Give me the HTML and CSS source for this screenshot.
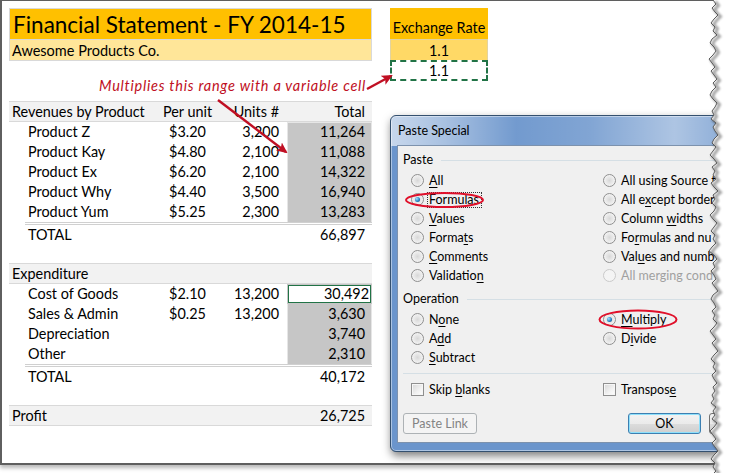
FILE: index.html
```html
<!DOCTYPE html>
<html>
<head>
<meta charset="utf-8">
<title>Paste Special - Multiply</title>
<link rel="stylesheet" href="styles.css">
</head>
<body>
<div class="frame">
  <div class="top">
    <div class="titlebox">
      <div class="title">Financial Statement - FY 2014-15</div>
      <div class="subtitle">Awesome Products Co.</div>
    </div>
    <div class="fx">
      <div class="fx-head">Exchange Rate</div>
      <div class="fx-val">1.1</div>
      <div class="fx-copy">1.1</div>
    </div>
  </div>

  <div class="sheet">
    <div class="row band"><span class="c1">Revenues by Product</span><span class="c2">Per unit</span><span class="c3">Units #</span><span class="c4">Total</span></div>
    <div class="row item"><span class="c1">Product Z</span><span class="c2">$3.20</span><span class="c3">3,200</span><span class="c4 sel first">11,264</span></div>
    <div class="row item"><span class="c1">Product Kay</span><span class="c2">$4.80</span><span class="c3">2,100</span><span class="c4 sel">11,088</span></div>
    <div class="row item"><span class="c1">Product Ex</span><span class="c2">$6.20</span><span class="c3">2,100</span><span class="c4 sel">14,322</span></div>
    <div class="row item"><span class="c1">Product Why</span><span class="c2">$4.40</span><span class="c3">3,500</span><span class="c4 sel">16,940</span></div>
    <div class="row item"><span class="c1">Product Yum</span><span class="c2">$5.25</span><span class="c3">2,300</span><span class="c4 sel last">13,283</span></div>
    <div class="dbl"></div>
    <div class="row item"><span class="c1">TOTAL</span><span class="c2"></span><span class="c3"></span><span class="c4">66,897</span></div>

    <div class="row band spaced"><span class="c1">Expenditure</span><span class="c2"></span><span class="c3"></span><span class="c4"></span></div>
    <div class="row item"><span class="c1">Cost of Goods</span><span class="c2">$2.10</span><span class="c3">13,200</span><span class="c4 active">30,492</span></div>
    <div class="row item"><span class="c1">Sales &amp; Admin</span><span class="c2">$0.25</span><span class="c3">13,200</span><span class="c4 sel">3,630</span></div>
    <div class="row item"><span class="c1">Depreciation</span><span class="c2"></span><span class="c3"></span><span class="c4 sel">3,740</span></div>
    <div class="row item"><span class="c1">Other</span><span class="c2"></span><span class="c3"></span><span class="c4 sel last">2,310</span></div>
    <div class="dbl"></div>
    <div class="row item"><span class="c1">TOTAL</span><span class="c2"></span><span class="c3"></span><span class="c4">40,172</span></div>

    <div class="row band spaced"><span class="c1">Profit</span><span class="c2"></span><span class="c3"></span><span class="c4">26,725</span></div>
  </div>
</div>

<div class="note">Multiplies this range with a variable cell</div>

<div class="dialog">
  <div class="dlg-title">Paste Special</div>
  <div class="dlg-panel">
    <div class="group">Paste</div>
    <div class="opts">
      <div class="opt"><i class="radio"></i><span><u>A</u>ll</span></div>
      <div class="opt"><i class="radio"></i><span>All using Source t</span></div>
      <div class="opt"><i class="radio on"></i><span class="focus"><u>F</u>ormulas</span></div>
      <div class="opt"><i class="radio"></i><span>All e<u>x</u>cept borders</span></div>
      <div class="opt"><i class="radio"></i><span><u>V</u>alues</span></div>
      <div class="opt"><i class="radio"></i><span>Column <u>w</u>idths</span></div>
      <div class="opt"><i class="radio"></i><span>Forma<u>t</u>s</span></div>
      <div class="opt"><i class="radio"></i><span>Fo<u>r</u>mulas and nu</span></div>
      <div class="opt"><i class="radio"></i><span><u>C</u>omments</span></div>
      <div class="opt"><i class="radio"></i><span>Val<u>u</u>es and numb</span></div>
      <div class="opt"><i class="radio"></i><span>Validatio<u>n</u></span></div>
      <div class="opt off"><i class="radio"></i><span>All merging cond</span></div>
    </div>
    <div class="group">Operation</div>
    <div class="opts">
      <div class="opt"><i class="radio"></i><span>N<u>o</u>ne</span></div>
      <div class="opt"><i class="radio on"></i><span><u>M</u>ultiply</span></div>
      <div class="opt"><i class="radio"></i><span>A<u>d</u>d</span></div>
      <div class="opt"><i class="radio"></i><span>D<u>i</u>vide</span></div>
      <div class="opt"><i class="radio"></i><span><u>S</u>ubtract</span></div>
      <div class="opt"></div>
    </div>
    <div class="sep"></div>
    <div class="opts checks">
      <div class="opt"><i class="check"></i><span>Skip <u>b</u>lanks</span></div>
      <div class="opt"><i class="check"></i><span>Transpos<u>e</u></span></div>
    </div>
    <div class="buttons">
      <div class="btn disabled">Paste Link</div>
      <div class="btn default">OK</div>
      <div class="btn"></div>
    </div>
  </div>
</div>

<svg class="marks" width="733" height="473" viewBox="0 0 733 473">
  <defs>
    <marker id="ah" markerWidth="11" markerHeight="10" refX="9" refY="5" orient="auto" markerUnits="userSpaceOnUse">
      <path d="M0,0 L11,5 L0,10 L2.5,5 Z" fill="#c00f23"/>
    </marker>
  </defs>
  <line x1="367" y1="89" x2="391" y2="76" stroke="#c00f23" stroke-width="2.4" marker-end="url(#ah)"/>
  <line x1="218" y1="100" x2="286" y2="152" stroke="#c00f23" stroke-width="2.4" marker-end="url(#ah)"/>
  <ellipse cx="444.5" cy="200" rx="38.5" ry="7" fill="none" stroke="#e0102a" stroke-width="2"/>
  <ellipse cx="638" cy="319.5" rx="38.5" ry="9" fill="none" stroke="#e0102a" stroke-width="2"/>
</svg>

<svg class="torn" width="33" height="473" viewBox="0 0 33 473">
  <defs>
    <filter id="blur" x="-50%" y="-5%" width="200%" height="110%"><feGaussianBlur stdDeviation="1.2"/></filter>
  </defs>
  <polygon fill="#ffffff" points="13,0 16,4 12,8 15,12 18,15 14,19 11,23 15,27 13,31 17,35 12,39 10,43 14,47 16,51 13,55 9,59 12,63 15,67 11,71 14,75 17,79 13,83 16,87 12,91 10,95 13,99 17,103 15,107 12,111 14,115 11,119 16,123 13,127 15,131 18,135 14,139 12,143 16,147 13,151 10,155 14,159 17,163 12,167 15,171 13,175 16,179 11,183 14,187 18,191 13,195 15,199 12,203 16,207 14,211 10,215 13,219 17,223 14,227 11,231 15,235 13,239 16,243 12,247 9,251 14,255 17,259 13,263 15,267 11,271 14,275 16,279 12,283 15,287 18,291 13,295 11,299 14,303 16,307 12,311 15,315 13,319 17,323 14,327 10,331 13,335 16,339 12,343 15,347 18,351 14,355 11,359 15,363 13,367 16,371 12,375 14,379 17,383 13,387 15,391 12,395 14,399 11,403 16,407 13,411 15,415 12,419 17,423 14,427 10,431 13,435 16,439 12,443 15,447 18,451 14,455 11,459 15,463 13,467 16,471 14,473 33,473 33,0"/>
  <polyline fill="none" stroke="rgba(0,0,0,0.35)" stroke-width="3" filter="url(#blur)" transform="translate(2.5,1.5)" points="13,0 16,4 12,8 15,12 18,15 14,19 11,23 15,27 13,31 17,35 12,39 10,43 14,47 16,51 13,55 9,59 12,63 15,67 11,71 14,75 17,79 13,83 16,87 12,91 10,95 13,99 17,103 15,107 12,111 14,115 11,119 16,123 13,127 15,131 18,135 14,139 12,143 16,147 13,151 10,155 14,159 17,163 12,167 15,171 13,175 16,179 11,183 14,187 18,191 13,195 15,199 12,203 16,207 14,211 10,215 13,219 17,223 14,227 11,231 15,235 13,239 16,243 12,247 9,251 14,255 17,259 13,263 15,267 11,271 14,275 16,279 12,283 15,287 18,291 13,295 11,299 14,303 16,307 12,311 15,315 13,319 17,323 14,327 10,331 13,335 16,339 12,343 15,347 18,351 14,355 11,359 15,363 13,367 16,371 12,375 14,379 17,383 13,387 15,391 12,395 14,399 11,403 16,407 13,411 15,415 12,419 17,423 14,427 10,431 13,435 16,439 12,443 15,447 18,451 14,455 11,459 15,463 13,467 16,471 14,473"/>
  <polyline fill="none" stroke="#5a5a5a" stroke-width="1" points="13,0 16,4 12,8 15,12 18,15 14,19 11,23 15,27 13,31 17,35 12,39 10,43 14,47 16,51 13,55 9,59 12,63 15,67 11,71 14,75 17,79 13,83 16,87 12,91 10,95 13,99 17,103 15,107 12,111 14,115 11,119 16,123 13,127 15,131 18,135 14,139 12,143 16,147 13,151 10,155 14,159 17,163 12,167 15,171 13,175 16,179 11,183 14,187 18,191 13,195 15,199 12,203 16,207 14,211 10,215 13,219 17,223 14,227 11,231 15,235 13,239 16,243 12,247 9,251 14,255 17,259 13,263 15,267 11,271 14,275 16,279 12,283 15,287 18,291 13,295 11,299 14,303 16,307 12,311 15,315 13,319 17,323 14,327 10,331 13,335 16,339 12,343 15,347 18,351 14,355 11,359 15,363 13,367 16,371 12,375 14,379 17,383 13,387 15,391 12,395 14,399 11,403 16,407 13,411 15,415 12,419 17,423 14,427 10,431 13,435 16,439 12,443 15,447 18,451 14,455 11,459 15,463 13,467 16,471 14,473"/>
</svg>
</body>
</html>
```

FILE: styles.css
```css
* { box-sizing: border-box; }
html, body { margin: 0; padding: 0; background: #fff; }
body {
  width: 733px;
  height: 473px;
  overflow: hidden;
  position: relative;
  font-family: Lato, "Open Sans", sans-serif;
  color: #000;
}

/* spreadsheet frame */
.frame {
  width: 733px;
  height: 465px;
  border-style: solid;
  border-color: #5f5f5f;
  border-width: 1px 0 2px 2px;
  padding: 7px 0 0 7px;
  box-shadow: 0 3px 4px rgba(0, 0, 0, 0.28);
}
.top { display: flex; align-items: flex-start; }
.titlebox { width: 363px; border: 1px solid #d9d9d9; }
.title {
  height: 30px;
  background: #ffc000;
  font-size: 22.5px;
  line-height: 28px;
  padding: 2px 0 0 3px;
  white-space: nowrap;
}
.subtitle {
  height: 21px;
  background: #ffe699;
  border-top: 1px solid #d9d9d9;
  font-size: 14.5px;
  line-height: 18px;
  padding: 2px 0 0 2px;
}
.fx { width: 98px; margin-left: 18px; font-size: 14.4px; text-align: center; }
.fx-head { height: 31px; background: #ffc000; line-height: 18px; padding-top: 11px; }
.fx-val {
  height: 21px;
  background: #ffd966;
  border: 1px solid #e2d3a0;
  border-bottom: 0;
  line-height: 18px;
  padding-top: 2px;
}
.fx-copy {
  height: 21px;
  border: 2px dashed #217346;
  line-height: 17px;
}

.sheet { width: 363px; margin-top: 20px; font-size: 14.4px; }
.row {
  display: grid;
  grid-template-columns: 141px 75px 62px 85px;
  height: 20px;
  line-height: 20px;
  white-space: nowrap;
}
.band {
  background: #f2f2f2;
  border-top: 1px solid #d9d9d9;
  border-bottom: 1px solid #d9d9d9;
  height: 21px;
  line-height: 19px;
}
.band.spaced { margin-top: 18px; }
.c1 { padding-left: 3px; }
.item .c1 { padding-left: 19px; }
.c2 { text-align: center; }
.c3 { text-align: right; padding-right: 8px; }
.c4 { text-align: right; padding-right: 7px; }
.sel {
  background: #c6c6c6;
  box-shadow: inset 1px 0 #e6e6e6, inset -1px 0 #e6e6e6;
}
.sel.first { box-shadow: inset 1px 0 #e6e6e6, inset -1px 0 #e6e6e6, inset 0 1px #e6e6e6; }
.active {
  background: #fff;
  padding-right: 3px;
  box-shadow: inset 0 0 0 1px #c6c6c6, inset 0 0 0 2px #217346;
}
.dbl {
  margin-left: 16px;
  height: 3px;
  border-top: 1px solid #d0d0d0;
  border-bottom: 1px solid #d0d0d0;
}

/* callout */
.note {
  position: absolute;
  left: 99px;
  top: 78px;
  font-size: 14.5px;
  line-height: 16px;
  font-style: italic;
  color: #c00f23;
  letter-spacing: 0.75px;
  white-space: nowrap;
}
.marks { position: absolute; left: 0; top: 0; z-index: 5; pointer-events: none; }
.torn { position: absolute; left: 700px; top: 0; z-index: 10; }

/* dialog */
.dialog {
  position: absolute;
  left: 390px;
  top: 115px;
  width: 332px;
  height: 337px;
  overflow: hidden;
  border: 1px solid #34506f;
  border-radius: 6px;
  padding: 0 6px 8px 6px;
  background:
    linear-gradient(to right, rgba(255,255,255,0.62) 0, rgba(255,255,255,0.42) 16%, rgba(255,255,255,0.05) 38%, rgba(255,255,255,0.15) 60%, rgba(255,255,255,0.45) 86%, rgba(255,255,255,0.25) 100%) top left / 100% 30px no-repeat,
    #6b95cc;
  box-shadow: inset 0 0 0 1px rgba(255,255,255,0.45), 1px 4px 8px rgba(0,0,0,0.5);
  font-size: 12.5px;
  z-index: 3;
}
.dlg-title { height: 29px; line-height: 29px; padding-left: 1px; white-space: nowrap; }
.dlg-panel {
  height: 298px;
  width: 340px;
  background: #f0f0f0;
  border: 1px solid #7d92ad;
  padding: 6px 0 0 0;
}
.group {
  display: flex;
  align-items: center;
  height: 16px;
  line-height: 16px;
  padding-left: 5px;
}
.group::after {
  content: "";
  flex: 1;
  height: 1px;
  background: #d5dfe5;
  margin-left: 8px;
}
.opts {
  display: grid;
  grid-template-columns: 192px 1fr;
  margin: 3px 0 6px 13px;
  white-space: nowrap;
}
.opt { display: flex; align-items: center; height: 19px; }
.opt > span { margin-left: 5px; }
.opt.off { color: #a0a0a0; }
u { text-decoration: underline; text-underline-offset: 2px; }
.focus { outline: 1px dotted #333; padding: 0 2px 0 1px; margin-left: 4px !important; line-height: 14px; }

.radio {
  display: block;
  width: 13px;
  height: 13px;
  flex: none;
  border-radius: 50%;
  border: 1px solid #8f8f8f;
  background: radial-gradient(circle at 50% 50%, #d8d8d8 0, #e9e9e9 45%, #fdfdfd 100%);
  position: relative;
}
.radio.on::after {
  content: "";
  position: absolute;
  left: 3px;
  top: 3px;
  width: 5px;
  height: 5px;
  border-radius: 50%;
  background: radial-gradient(circle at 35% 35%, #a8e0ff 0, #2a86c8 55%, #0d3f6e 100%);
}
.off .radio { border-color: #cacaca; background: #f4f4f4; }
.check {
  display: block;
  width: 13px;
  height: 13px;
  flex: none;
  border: 1px solid #8f8f8f;
  background: linear-gradient(135deg, #d6d6d6 0, #f2f2f2 60%, #ffffff 100%);
  box-shadow: inset 0 0 0 1px #f6f6f6;
}
.sep { height: 1px; background: #d5dfe5; margin: 1px 0 0 5px; }
.checks { margin-top: 6px; margin-bottom: 0; }
.buttons { display: flex; margin-top: 14px; padding-left: 5px; }
.btn {
  width: 74px;
  height: 21px;
  border-radius: 3px;
  border: 1px solid #707070;
  text-align: center;
  line-height: 19px;
  background: linear-gradient(#f2f2f2 0, #ebebeb 50%, #dddddd 51%, #cfcfcf 100%);
  flex: none;
}
.btn.disabled {
  border-color: #adb2b5;
  background: #f4f4f4;
  color: #838383;
}
.btn.default {
  margin-left: 151px;
  width: 73px;
  border-color: #3c7fb1;
  box-shadow: inset 0 0 0 1px #8ee0fb;
}
.btn + .btn:not(.default) { margin-left: 8px; }
```
